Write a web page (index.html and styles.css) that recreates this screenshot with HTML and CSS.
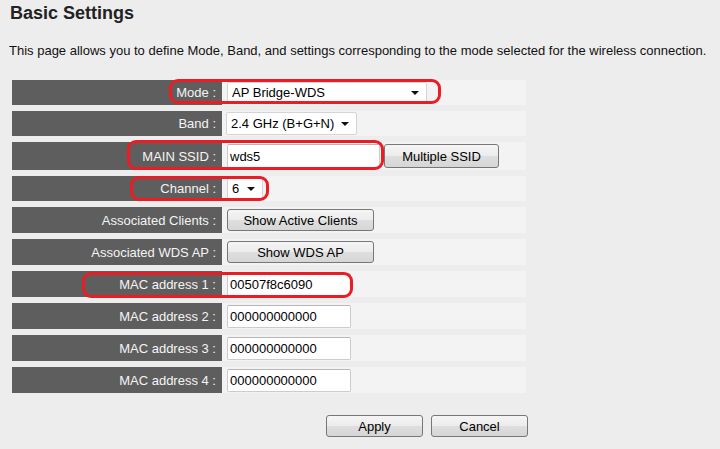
FILE: index.html
```html
<!DOCTYPE html>
<html>
<head>
<meta charset="utf-8">
<title>Basic Settings</title>
<link rel="stylesheet" href="styles.css">
</head>
<body>
<h1 class="title">Basic Settings</h1>
<p class="desc">This page allows you to define Mode, Band, and settings corresponding to the mode selected for the wireless connection.</p>
<div class="table">
  <div class="row r25">
    <div class="label">Mode :</div>
    <div class="value"><div class="select sel-mode">AP Bridge-WDS<span class="arrow"></span></div></div>
    <div class="mark mark-mode"></div>
  </div>
  <div class="row r25">
    <div class="label">Band :</div>
    <div class="value"><div class="select sel-band">2.4 GHz (B+G+N)<span class="arrow"></span></div></div>
  </div>
  <div class="row r28">
    <div class="label">MAIN SSID :</div>
    <div class="value"><div class="input in-ssid">wds5</div><div class="btn btn-multi">Multiple SSID</div></div>
    <div class="mark mark-ssid"></div>
  </div>
  <div class="row r25">
    <div class="label">Channel :</div>
    <div class="value"><div class="select sel-chan">6<span class="arrow"></span></div></div>
    <div class="mark mark-chan"></div>
  </div>
  <div class="row r26">
    <div class="label">Associated Clients :</div>
    <div class="value"><div class="btn btn-show">Show Active Clients</div></div>
  </div>
  <div class="row r26">
    <div class="label">Associated WDS AP :</div>
    <div class="value"><div class="btn btn-show">Show WDS AP</div></div>
  </div>
  <div class="row r26">
    <div class="label">MAC address 1 :</div>
    <div class="value"><div class="input in-mac">00507f8c6090</div></div>
    <div class="mark mark-mac"></div>
  </div>
  <div class="row r26">
    <div class="label">MAC address 2 :</div>
    <div class="value"><div class="input in-mac">000000000000</div></div>
  </div>
  <div class="row r26">
    <div class="label">MAC address 3 :</div>
    <div class="value"><div class="input in-mac">000000000000</div></div>
  </div>
  <div class="row r26">
    <div class="label">MAC address 4 :</div>
    <div class="value"><div class="input in-mac">000000000000</div></div>
  </div>
</div>
<div class="actions">
  <div class="btn btn-act">Apply</div>
  <div class="btn btn-act">Cancel</div>
</div>
</body>
</html>
```
FILE: styles.css
```css
html, body {
  margin: 0;
  padding: 0;
}
body {
  background: #ededed;
  font-family: "Liberation Sans", Arial, sans-serif;
  font-size: 13px;
  color: #111;
  width: 720px;
  height: 449px;
  overflow: hidden;
}
.title {
  margin: 2px 0 0 10px;
  font-size: 18px;
  line-height: 22px;
  font-weight: bold;
  color: #222;
}
.desc {
  margin: 19px 0 0 9px;
  line-height: 16px;
  font-size: 13px;
  color: #111;
}
.table {
  margin: 21px 0 0 12px;
  width: 514px;
  display: flex;
  flex-direction: column;
  gap: 6px;
}
.row {
  position: relative;
  display: flex;
}
.r25 { height: 25px; }
.r26 { height: 26px; }
.r28 { height: 28px; }
.label {
  width: 204px;
  padding-right: 6px;
  background: #5e5e5e;
  color: #f4f4f4;
  display: flex;
  align-items: center;
  justify-content: flex-end;
  white-space: nowrap;
}
.value {
  flex: 1;
  background: #f3f3f3;
  display: flex;
  align-items: center;
  padding-left: 5px;
  gap: 4px;
}
.select {
  position: relative;
  box-sizing: border-box;
  background: #fff;
  border: 1px solid #d4d4d4;
  border-radius: 2px;
  padding-left: 4px;
  display: flex;
  align-items: center;
  color: #000;
  white-space: nowrap;
}
.arrow {
  position: absolute;
  right: 7px;
  top: 50%;
  margin-top: -2px;
  width: 0;
  height: 0;
  border-left: 4px solid transparent;
  border-right: 4px solid transparent;
  border-top: 4px solid #111;
}
.sel-mode { width: 200px; height: 21px; }
.sel-band { width: 131px; height: 23px; margin-left: -1px; }
.sel-chan { width: 36px; height: 22px; }
.input {
  box-sizing: border-box;
  background: #fff;
  border: 1px solid #c9cdd3;
  border-top-color: #b4b7bc;
  border-radius: 2px;
  padding-left: 2px;
  display: flex;
  align-items: center;
  color: #000;
  white-space: nowrap;
}
.in-ssid { width: 153px; height: 24px; }
.in-mac { width: 124px; height: 23px; }
.btn {
  box-sizing: border-box;
  border: 1px solid #777;
  border-radius: 3px;
  background: linear-gradient(#f5f5f5 0%, #ececec 48%, #dedede 52%, #d6d6d6 100%);
  display: flex;
  align-items: center;
  justify-content: center;
  color: #000;
  white-space: nowrap;
}
.btn-multi { width: 115px; height: 24px; }
.btn-show { width: 147px; height: 22px; }
.actions {
  margin: 22px 0 0 326px;
  display: flex;
  gap: 8px;
}
.btn-act { width: 97px; height: 22px; }
.btn-act + .btn-act { width: 97px; }
.mark {
  position: absolute;
  box-sizing: border-box;
  border: 3px solid #ec1c24;
  border-radius: 9px;
  pointer-events: none;
}
.mark-mode { left: 157px; top: -1px; width: 272px; height: 25px; }
.mark-ssid { left: 115px; top: -2px; width: 257px; height: 30px; }
.mark-chan { left: 118px; top: 0; width: 139px; height: 25px; }
.mark-mac { left: 70px; top: 1px; width: 271px; height: 26px; }
```
